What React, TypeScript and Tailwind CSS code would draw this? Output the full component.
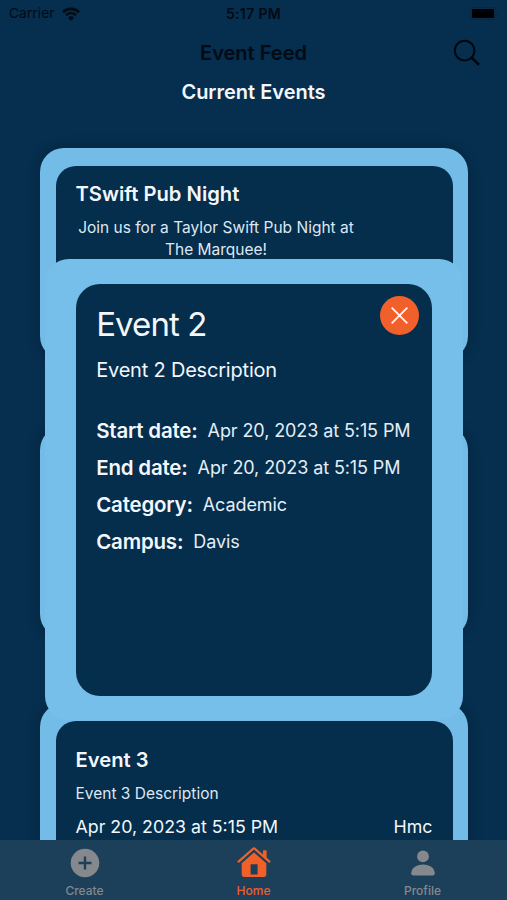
import React from "react";

const events = [
  {
    title: "TSwift Pub Night",
    description: ["Join us for a Taylor Swift Pub Night at", "The Marquee!"],
    date: "",
    campus: "",
  },
  { title: "", description: [], date: "", campus: "" },
  {
    title: "Event 3",
    description: ["Event 3 Description"],
    date: "Apr 20, 2023 at 5:15 PM",
    campus: "Hmc",
  },
];

const details = [
  { label: "Start date:", value: "Apr 20, 2023 at 5:15 PM" },
  { label: "End date:", value: "Apr 20, 2023 at 5:15 PM" },
  { label: "Category:", value: "Academic" },
  { label: "Campus:", value: "Davis" },
];

const StatusBar = () => {
  return (
    <div className="h-[27px] grid grid-cols-3 items-center px-[9px] text-[13.7px] leading-[27px] text-[#020a14]">
      <div className="flex items-center gap-[7px]">
        <span className="tracking-[0.1px]">Carrier</span>
        <svg width="18" height="14" viewBox="0 0 18 14" fill="none">
          <path d="M1 5.2a11.4 11.4 0 0 1 16 0" stroke="#020a14" strokeWidth="2.8" />
          <path d="M3.9 8.3a7.3 7.3 0 0 1 10.2 0" stroke="#020a14" strokeWidth="2.2" />
          <path d="M9 13.8L6 10.7a4.3 4.3 0 0 1 6 0z" fill="#020a14" />
        </svg>
      </div>
      <div className="text-center text-[14px] font-semibold tracking-[0.35px] whitespace-nowrap">
        5:17 PM
      </div>
      <div className="flex justify-end">
        <div className="flex items-center gap-[1px]">
          <div className="w-[26px] h-[13px] rounded-[3px] border border-[#052846] p-[1px]">
            <div className="h-full bg-black rounded-[1px]" />
          </div>
          <div className="w-[1px] h-[4px] bg-[#052846]" />
        </div>
      </div>
    </div>
  );
};

const Header = () => {
  return (
    <div className="h-[51px] grid grid-cols-[1fr_auto_1fr] items-center">
      <div />
      <h1 className="text-[20px] font-semibold leading-[24px] text-[#020a14]">
        Event Feed
      </h1>
      <div className="flex justify-end pr-[26px]">
        <svg width="28" height="28" viewBox="0 0 28 28" fill="none" stroke="#01060c">
          <circle cx="11.6" cy="11.6" r="9.8" strokeWidth="1.9" />
          <path d="M18.6 18.6l7.4 7.2" strokeWidth="2.6" />
        </svg>
      </div>
    </div>
  );
};

const EventCard = ({ event }: { event: (typeof events)[number] }) => {
  return (
    <div className="h-[212px] shrink-0 rounded-[24px] bg-[#73bce8] px-[15.5px] py-[18px] shadow-[0_0_14px_rgba(0,0,0,0.22)]">
      <div className="flex h-full flex-col justify-center rounded-[20px] bg-[#052d4c] px-[20px] pb-[32px] text-[#f3f7fc]">
        <h2 className="text-[20.2px] font-semibold leading-[26px]">{event.title}</h2>
        <div className="w-[281px] pt-[10px] text-center text-[15.5px] leading-[22px] text-[#dce8f3]">
          {event.description.length === 1 ? (
            <p className="text-left">{event.description[0]}</p>
          ) : (
            event.description.map((line) => (
              <p key={line} className="whitespace-nowrap">
                {line}
              </p>
            ))
          )}
        </div>
        <div className="flex h-[34px] items-end justify-between text-[17.8px] leading-[24px]">
          <span>{event.date}</span>
          <span>{event.campus}</span>
        </div>
      </div>
    </div>
  );
};

const EventModal = () => {
  return (
    <div className="absolute left-[44.7px] top-[259px] w-[418.6px] h-[461px] rounded-[24px] bg-[#76bfea] px-[31.5px] py-[24.5px]">
      <div className="h-full rounded-[24px] bg-[#052d4c] px-[20px] pt-[12px] text-[#f3f7fc]">
        <div className="flex justify-between">
          <h2 className="pt-[8px] text-[33px] leading-[40px] tracking-[-0.9px]">Event 2</h2>
          <button className="mr-[-7px] flex h-[39px] w-[39px] items-center justify-center rounded-full bg-[#f15f2b]">
            <svg width="17" height="17" viewBox="0 0 17 17" stroke="#fff4ef" strokeWidth="1.9">
              <path d="M0.7 0.7l15.6 15.6M16.3 0.7L0.7 16.3" />
            </svg>
          </button>
        </div>
        <p className="pt-[13px] text-[20px] leading-[26px] tracking-[-0.2px]">
          Event 2 Description
        </p>
        <div className="pt-[30px]">
          {details.map((item) => (
            <div key={item.label} className="flex h-[37px] items-center gap-[10px] whitespace-nowrap">
              <span className="text-[20.5px] font-semibold tracking-[-0.2px]">{item.label}</span>
              <span className="pb-[1px] text-[18px] tracking-[-0.1px] text-[#e4edf6]">
                {item.value}
              </span>
            </div>
          ))}
        </div>
      </div>
    </div>
  );
};

const TabBar = () => {
  return (
    <div className="grid h-[60px] shrink-0 grid-cols-3 bg-[#1c405a] text-center text-[12px] font-medium leading-[16px] text-[#85888c]">
      <div className="flex flex-col items-center pt-[8px]">
        <svg width="30" height="30" viewBox="0 0 30 30">
          <circle cx="15" cy="15" r="14.3" fill="#85888c" />
          <path d="M15 8.5v13M8.5 15h13" stroke="#1c405a" strokeWidth="2.4" />
        </svg>
        <span className="pt-[5px]">Create</span>
      </div>
      <div className="flex flex-col items-center pt-[7px] text-[#e8602f]">
        <svg width="34" height="31" viewBox="0 0 34 31" fill="#f2602a">
          <path d="M26 9.3V3.9q0-.7.7-.7h2.2q.7 0 .7.7v8.6z" />
          <path d="M1.6 14.6L15.9 2q1.1-1 2.2 0l14.3 12.6" fill="none" stroke="#f2602a" strokeWidth="2.3" strokeLinecap="round" />
          <path fillRule="evenodd" d="M17 5.4l12.3 10.9v10.9q0 2.7-2.7 2.7H7.4q-2.7 0-2.7-2.7V16.3zM13.6 17.3v10.1h7V17.3z" />
        </svg>
        <span className="pt-[5px]">Home</span>
      </div>
      <div className="flex flex-col items-center pt-[8px]">
        <svg width="26" height="30" viewBox="0 0 26 30" fill="#85888c">
          <circle cx="13" cy="8.4" r="5.9" />
          <path d="M1.2 25.6C1.4 20.3 6 16.6 13 16.6s11.6 3.7 11.8 9q0 1.8-1.8 1.8H3q-1.8 0-1.8-1.8z" />
        </svg>
        <span className="pt-[5px]">Profile</span>
      </div>
    </div>
  );
};

const App = () => {
  return (
    <div className="relative flex h-[900px] w-[507px] flex-col overflow-hidden bg-[#062e4e] font-['Inter',sans-serif]">
      <StatusBar />
      <Header />
      <div className="flex-1 overflow-hidden">
        <h2 className="text-center text-[20px] font-semibold leading-[28px] text-[#f3f7fc]">
          Current Events
        </h2>
        <div className="flex flex-col gap-[65.5px] pl-[40px] pr-[39px] pt-[42px]">
          {events.map((event, index) => (
            <EventCard key={index} event={event} />
          ))}
        </div>
      </div>
      <TabBar />
      <EventModal />
    </div>
  );
};

export default App;
